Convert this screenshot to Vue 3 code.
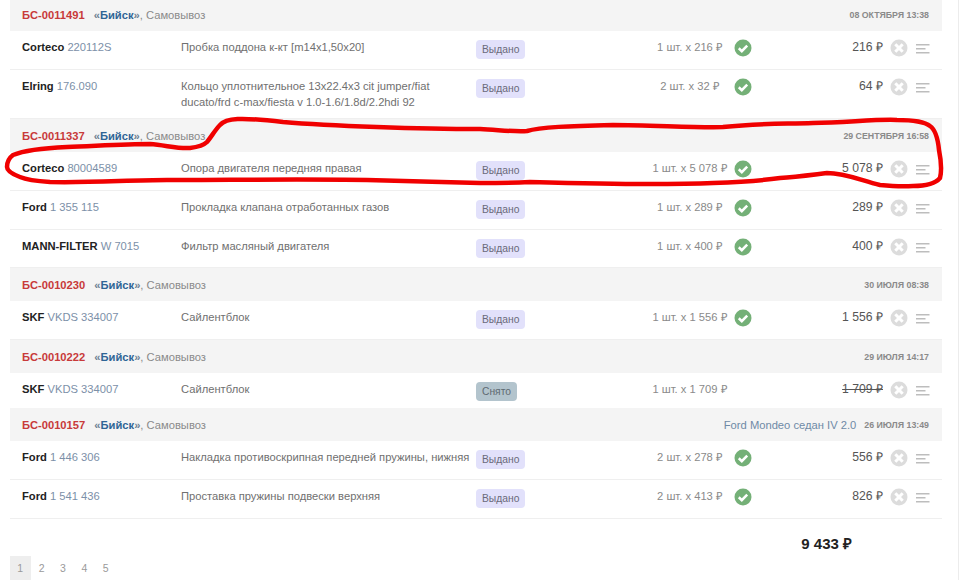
<template>
  <div class="page">
    <div class="list">
      <template v-for="order in orders" :key="order.id">
        <div class="head">
          <div class="head-left">
            <span class="num">{{ order.id }}</span>
            <span class="place"><b>«<i>Бийск</i>»</b>, Самовывоз</span>
          </div>
          <div class="head-right">
            <span v-if="order.car" class="car">{{ order.car }}</span>
            <span class="date">{{ order.date }}</span>
          </div>
        </div>
        <div
          v-for="item in order.items"
          :key="item.code"
          :class="['row', item.size]"
        >
          <div class="part"><b>{{ item.brand }}</b> {{ item.code }}</div>
          <div class="desc">{{ item.name }}</div>
          <div><span :class="['badge', { off: item.removed }]">{{ item.removed ? 'Снято' : 'Выдано' }}</span></div>
          <div class="qty">{{ item.qty }}</div>
          <div class="ok">
            <svg v-if="!item.removed" viewBox="0 0 18 18" width="18" height="18">
              <circle cx="9" cy="9" r="8.5" fill="#74b077" />
              <path d="M4.8 9.3l3 2.8L13.2 6.7" fill="none" stroke="#fff" stroke-width="2.6" />
            </svg>
          </div>
          <div :class="['sum', { struck: item.removed }]">{{ item.sum }}</div>
          <div></div>
          <div class="del">
            <svg viewBox="0 0 18 18" width="18" height="18">
              <circle cx="9" cy="9" r="8.5" fill="#dcdcdc" />
              <path d="M5.3 5.3l7.4 7.4M12.7 5.3l-7.4 7.4" fill="none" stroke="#fff" stroke-width="3" />
            </svg>
          </div>
          <div class="menu">
            <svg viewBox="0 0 14 10" width="14" height="10">
              <path d="M0 .75h13.5M0 4.75h9.5M0 8.75h13.5" fill="none" stroke="#bdbdbd" stroke-width="1.3" />
            </svg>
          </div>
        </div>
      </template>
    </div>

    <div class="total">9 433 ₽</div>

    <div class="pages">
      <span v-for="n in 5" :key="n" :class="['pg', { cur: n === 1 }]">{{ n }}</span>
    </div>

    <svg class="scribble" viewBox="0 0 960 580" width="960" height="580">
      <path
        d="M220 125C226 118 240 117 283 122C330 126 420 129 480 129C500 130 515 132 527 131C540 127 570 126 613 125C650 125 700 128 723 127C760 123 780 124 813 123C850 122 880 119 897 120C915 120 925 122 930 126C936 130 938 140 939 150C941 160 942 170 940 178C935 184 925 186 913 186C900 187 890 186 880 185C860 180 845 173 827 173C810 175 795 177 780 178C760 181 740 182 713 183C690 184 670 184 647 184C610 184 570 183 530 182C510 183 495 183 480 183C440 182 410 181 367 180C300 179 230 180 167 180C130 180 90 183 50 182C35 181 27 180 20 177C12 174 7 171 7 167C7 161 9 158 13 155C25 150 45 148 67 147C95 146 125 144 150 144C165 145 178 149 190 148C198 147 203 146 207 142C212 136 215 130 220 125Z"
        fill="none"
        stroke="#f00000"
        stroke-width="4.5"
      />
    </svg>
  </div>
</template>

<script setup>
const orders = [
  {
    id: 'БС-0011491',
    date: '08 ОКТЯБРЯ 13:38',
    items: [
      { brand: 'Corteco', code: '220112S', name: 'Пробка поддона к-кт [m14x1,50x20]', qty: '1 шт. x 216 ₽', sum: '216 ₽' },
      { brand: 'Elring', code: '176.090', name: 'Кольцо уплотнительное 13x22.4x3 cit jumper/fiat ducato/frd c-max/fiesta v 1.0-1.6/1.8d/2.2hdi 92', qty: '2 шт. x 32 ₽', sum: '64 ₽', size: 'tall' }
    ]
  },
  {
    id: 'БС-0011337',
    date: '29 СЕНТЯБРЯ 16:58',
    items: [
      { brand: 'Corteco', code: '80004589', name: 'Опора двигателя передняя правая', qty: '1 шт. x 5 078 ₽', sum: '5 078 ₽' },
      { brand: 'Ford', code: '1 355 115', name: 'Прокладка клапана отработанных газов', qty: '1 шт. x 289 ₽', sum: '289 ₽' },
      { brand: 'MANN-FILTER', code: 'W 7015', name: 'Фильтр масляный двигателя', qty: '1 шт. x 400 ₽', sum: '400 ₽', size: 'low' }
    ]
  },
  {
    id: 'БС-0010230',
    date: '30 ИЮЛЯ 08:38',
    items: [
      { brand: 'SKF', code: 'VKDS 334007', name: 'Сайлентблок', qty: '1 шт. x 1 556 ₽', sum: '1 556 ₽' }
    ]
  },
  {
    id: 'БС-0010222',
    date: '29 ИЮЛЯ 14:17',
    items: [
      { brand: 'SKF', code: 'VKDS 334007 ', name: 'Сайлентблок', qty: '1 шт. x 1 709 ₽', sum: '1 709 ₽', removed: true, size: 'short' }
    ]
  },
  {
    id: 'БС-0010157',
    date: '26 ИЮЛЯ 13:49',
    car: 'Ford Mondeo седан IV 2.0',
    items: [
      { brand: 'Ford', code: '1 446 306', name: 'Накладка противоскрипная передней пружины, нижняя', qty: '2 шт. x 278 ₽', sum: '556 ₽' },
      { brand: 'Ford', code: '1 541 436', name: 'Проставка пружины подвески верхняя', qty: '2 шт. x 413 ₽', sum: '826 ₽' }
    ]
  }
]
</script>

<style scoped>
.page {
  position: relative;
  width: 959px;
  height: 580px;
  overflow: hidden;
  background: #fff;
  padding: 0 16px 0 10px;
  box-sizing: border-box;
  border-right: 1px solid #ececec;
  font-family: "Liberation Sans", Arial, sans-serif;
  font-size: 11.2px;
  color: #666;
}

.list { margin-top: -2px; }

.head {
  height: 33px;
  background: #f4f4f4;
  display: flex;
  align-items: center;
  justify-content: space-between;
  padding: 0 13px 0 12px;
}

.num {
  color: #c83a3a;
  font-weight: 700;
  margin-right: 9px;
}

.place { color: #8a8a8a; }
.place b { color: #6d7f92; }
.place i { color: #2f6596; font-style: normal; }

.head-right {
  display: flex;
  align-items: center;
  gap: 8px;
}

.car { color: #6f8aa6; }

.date {
  color: #8a8a8a;
  font-size: 8.8px;
  font-weight: 700;
}

.row {
  height: 39px;
  box-sizing: border-box;
  padding: 8px 12px 0;
  border-bottom: 1px solid #efefef;
  display: grid;
  grid-template-columns: 159px 295px 170px 88px 18px 131px 7px 18px 22px;
  line-height: 16px;
}
.row.tall { height: 49px; }
.row.low { height: 38px; }
.row.short { height: 35px; border-bottom: 0; }

.part { color: #7c90a8; white-space: nowrap; }
.part b { color: #222; }

.desc { color: #707070; }

.badge {
  display: inline-block;
  margin-top: 1px;
  padding: 0 6px;
  height: 19px;
  line-height: 19px;
  font-size: 10.3px;
  border-radius: 4px;
  background: #e2e1fb;
  color: #6a6a7a;
}
.badge.off {
  background: #b3c4cd;
  color: #5f6b72;
}

.qty {
  text-align: center;
  color: #8a8a8a;
  white-space: nowrap;
}

.ok, .del { height: 18px; }

.sum {
  text-align: right;
  font-size: 12.2px;
  color: #555;
  white-space: nowrap;
}
.sum.struck { text-decoration: line-through; }

.del svg, .ok svg { display: block; }

.menu {
  display: flex;
  justify-content: flex-end;
  padding-top: 5px;
}
.menu svg { display: block; }

.total {
  width: 842px;
  margin-top: 16px;
  text-align: right;
  font-size: 15px;
  font-weight: 700;
  line-height: 18px;
  color: #222;
}

.pages {
  display: flex;
  margin-top: 3px;
  font-size: 10.5px;
  color: #9a9a9a;
}

.pg {
  width: 21.4px;
  height: 24px;
  line-height: 24px;
  text-align: center;
  box-sizing: border-box;
  padding-right: 1px;
}
.pg.cur { background: #eee; }

.scribble {
  position: absolute;
  top: 0;
  left: 0;
  pointer-events: none;
}
</style>

<style>
html, body { background: #fff; }
</style>
